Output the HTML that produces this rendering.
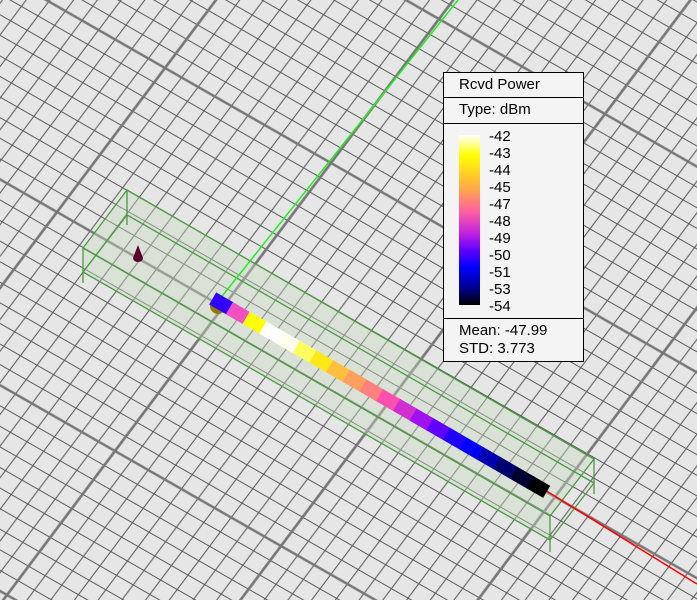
<!DOCTYPE html>
<html><head><meta charset="utf-8"><style>
html,body{margin:0;padding:0}
body{width:697px;height:600px;overflow:hidden;position:relative;background:#e6e6e6;font-family:"Liberation Sans",Arial,sans-serif}
svg{position:absolute;left:0;top:0}
#leg{position:absolute;left:443px;top:72px;width:139px;height:288px;background:#f4f4f4;border:1px solid #000;font-size:15px;color:#000}
.row{position:absolute;left:0;width:139px;border-bottom:1px solid #000}
.lab{position:absolute;left:45px;line-height:17px}
</style></head><body>
<svg width="697" height="600">
<defs>
<pattern id="g" patternUnits="userSpaceOnUse" width="10" height="10" patternTransform="matrix(16.6 9.5 -10.8 14.4 165 68)">
<path d="M0,1H10M0,2H10M0,3H10M0,4H10M0,5H10M0,6H10M0,7H10M0,8H10M0,9H10M1,0V10M2,0V10M3,0V10M4,0V10M5,0V10M6,0V10M7,0V10M8,0V10M9,0V10" stroke="#5a5a5a" stroke-width="0.055" fill="none"/>
<path d="M0,0H10M0,10H10M0,0V10M10,0V10" stroke="#777" stroke-width="0.14" fill="none"/>
</pattern>
</defs>
<rect width="697" height="600" fill="#e6e6e6"/>
<rect width="697" height="600" fill="url(#g)"/>
<polygon points="127,190 594,459 550,516 83,248" fill="#c8dcc0" fill-opacity="0.4"/>
<polygon points="83,248 550,516 550,540 83,272" fill="#c8dcc0" fill-opacity="0.4"/>
<g stroke="#4a9a40" stroke-width="1.3" fill="none">
<polyline points="127,190 594,459 550,516 83,248 127,190"/>
<polyline points="127,215 594,483 550,540 83,272 127,215"/>
<line x1="127" y1="190" x2="127" y2="225"/>
<line x1="83" y1="248" x2="83" y2="283"/>
<line x1="594" y1="459" x2="594" y2="494"/>
<line x1="550" y1="516" x2="550" y2="552"/>
</g>
<line x1="215" y1="305" x2="458" y2="0" stroke="#22ee22" stroke-width="1.5"/>
<line x1="540" y1="487" x2="697" y2="584" stroke="#ff0000" stroke-width="1.5"/>
<path d="M138,245 L133,258 A5,4 0 0 0 143,258 Z" fill="#5a0030"/>
<circle cx="218" cy="306" r="8" fill="#937800"/>
<g transform="translate(221,303.3) rotate(30.07)">
<rect x="-9.65" y="-7" width="20" height="14" fill="#3000ff"/>
<rect x="9.65" y="-7" width="20" height="14" fill="#f050c0"/>
<rect x="28.95" y="-7" width="20" height="14" fill="#ffff00"/>
<rect x="48.25" y="-7" width="20" height="14" fill="#ffffff"/>
<rect x="67.55" y="-7" width="20" height="14" fill="#fffff0"/>
<rect x="86.85" y="-7" width="20" height="14" fill="#ffff60"/>
<rect x="106.15" y="-7" width="20" height="14" fill="#ffe818"/>
<rect x="125.45" y="-7" width="20" height="14" fill="#ffc040"/>
<rect x="144.75" y="-7" width="20" height="14" fill="#ffa060"/>
<rect x="164.05" y="-7" width="20" height="14" fill="#ff8080"/>
<rect x="183.35" y="-7" width="20" height="14" fill="#ff50b0"/>
<rect x="202.65" y="-7" width="20" height="14" fill="#d030d0"/>
<rect x="221.95" y="-7" width="20" height="14" fill="#a010f0"/>
<rect x="241.25" y="-7" width="20" height="14" fill="#6000ff"/>
<rect x="260.55" y="-7" width="20" height="14" fill="#2000ff"/>
<rect x="279.85" y="-7" width="20" height="14" fill="#0000ff"/>
<rect x="299.15" y="-7" width="20" height="14" fill="#0000b0"/>
<rect x="318.45" y="-7" width="20" height="14" fill="#000070"/>
<rect x="337.75" y="-7" width="20" height="14" fill="#000030"/>
<rect x="357.05" y="-7" width="19.3" height="14" fill="#000000"/>
</g>
</svg>
<div id="leg">
<div class="row" style="top:0;height:24px"><span style="position:absolute;left:15px;top:3px">Rcvd Power</span></div>
<div class="row" style="top:25px;height:25px"><span style="position:absolute;left:15px;top:3px">Type: dBm</span></div>
<div style="position:absolute;left:15px;top:62px;width:21px;height:170px;background:linear-gradient(#ffffff 0%,#ffff00 12%,#ffb040 30%,#ff60a0 45%,#c020e0 58%,#6000ff 68%,#0000ff 78%,#000090 90%,#000000 100%)"></div>
<div class="lab" style="top:55px">-42<br>-43<br>-44<br>-45<br>-47<br>-48<br>-49<br>-50<br>-51<br>-53<br>-54</div>
<div class="row" style="top:245px;height:0"></div>
<div style="position:absolute;left:15px;top:249px;line-height:18px">Mean: -47.99<br>STD: 3.773</div>
</div>
</body></html>
